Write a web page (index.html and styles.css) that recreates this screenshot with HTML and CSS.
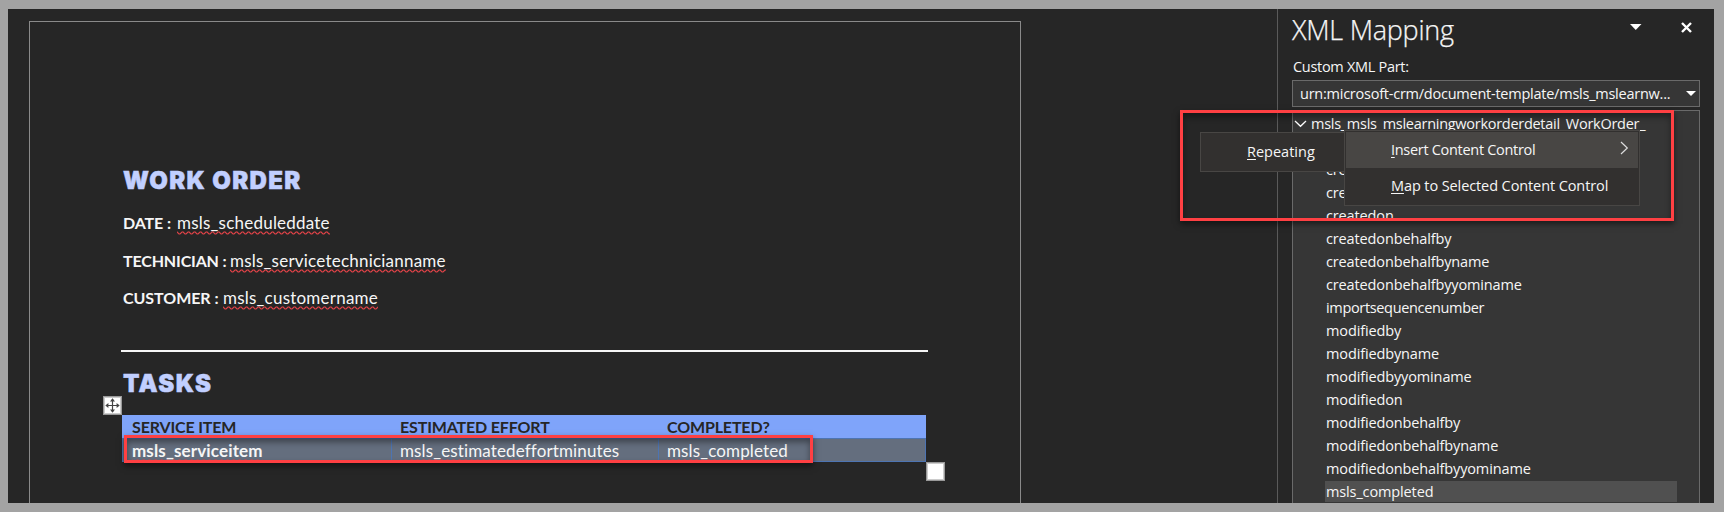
FILE: index.html
```
<!DOCTYPE html>
<html lang="en">
<head>
<meta charset="utf-8">
<title>XML Mapping</title>
<link rel="stylesheet" href="styles.css">
</head>
<body>
<div class="window">
  <main class="workspace">
    <article class="page">
      <h1 class="heading">WORK ORDER</h1>
      <p class="field"><b class="k-date">DATE :</b><span class="typo">msls_scheduleddate</span></p>
      <p class="field"><b class="k-tech">TECHNICIAN :</b><span class="typo">msls_servicetechnicianname</span></p>
      <p class="field"><b class="k-cust">CUSTOMER :</b><span class="typo">msls_customername</span></p>
      <div class="rule"></div>
      <h2 class="heading tasks-title">TASKS</h2>
      <div class="tasks">
        <div class="row head"><span>SERVICE ITEM</span><span>ESTIMATED EFFORT</span><span>COMPLETED?</span></div>
        <div class="row body"><span><b class="typo">msls_serviceitem</b></span><span><i class="typo">msls_estimatedeffortminutes</i></span><span><i class="typo">msls_completed</i></span></div>
        <div class="handle move"><svg width="15" height="15" viewBox="0 0 15 15"><path d="M7.5 1v13M1 7.5h13" stroke="#444" stroke-width="1.2"/><path d="M7.5 0.3L10 3.4H5zM7.5 14.7L10 11.6H5zM.3 7.5L3.4 5v5zM14.7 7.5L11.6 5v5z" fill="#444"/></svg></div>
        <div class="handle resize"></div>
      </div>
    </article>
  </main>
  <aside class="pane">
    <header class="pane-head">
      <h2 class="pane-title">XML Mapping</h2>
      <svg class="caret" width="12" height="6" viewBox="0 0 12 6"><path d="M0 0h11.5L5.75 6z" fill="#fff"/></svg>
      <svg class="close" width="11" height="11" viewBox="0 0 11 11"><path d="M1 1l9 9M10 1l-9 9" stroke="#fff" stroke-width="2.4"/></svg>
    </header>
    <div class="label">Custom XML Part:</div>
    <div class="select"><span>urn:microsoft-crm/document-template/msls_mslearnw...</span><svg width="10" height="5" viewBox="0 0 10 5"><path d="M0 0h10L5 5z" fill="#fff"/></svg></div>
    <div class="tree">
      <div class="node root"><svg width="13" height="8" viewBox="0 0 13 8"><path d="M1 1l5.5 5.3L12 1" fill="none" stroke="#fff" stroke-width="1.3"/></svg><span>msls_msls_mslearningworkorderdetail_WorkOrder_</span></div>
      <div class="node"></div>
      <div class="node">cre</div>
      <div class="node">cre</div>
      <div class="node">createdon</div>
      <div class="node">createdonbehalfby</div>
      <div class="node">createdonbehalfbyname</div>
      <div class="node">createdonbehalfbyyominame</div>
      <div class="node tight">importsequencenumber</div>
      <div class="node">modifiedby</div>
      <div class="node">modifiedbyname</div>
      <div class="node">modifiedbyyominame</div>
      <div class="node">modifiedon</div>
      <div class="node">modifiedonbehalfby</div>
      <div class="node">modifiedonbehalfbyname</div>
      <div class="node">modifiedonbehalfbyyominame</div>
      <div class="node selected">msls_completed</div>
    </div>
  </aside>
  <div class="menu context">
    <div class="item hover"><span class="insert"><u>I</u>nsert Content Control</span><svg width="9" height="14" viewBox="0 0 9 14"><path d="M1 1l6.3 6L1 13" fill="none" stroke="#ddd" stroke-width="1.2"/></svg></div>
    <div class="item"><span><u>M</u>ap to Selected Content Control</span></div>
  </div>
  <div class="menu submenu"><span><u>R</u>epeating</span></div>
  <div class="callout callout-menu"></div>
  <div class="callout callout-row"></div>
</div>
</body>
</html>
```

FILE: styles.css
```
* { box-sizing: border-box; margin: 0; }
body {
  height: 512px;
  padding: 9px 10px 9px 8px;
  background: #a3a3a3;
  color: #f6f6f6;
  font: 14.5px "Open Sans", sans-serif;
  overflow: hidden;
}
.window {
  position: relative;
  display: flex;
  height: 494px;
  background: #262626;
  overflow: hidden;
}
.window svg { flex: none; }

/* Document */
.workspace { flex: 1; padding: 12px 0 0 21px; }
.page {
  width: 992px;
  height: 500px;
  padding: 144px 91px 0 93px;
  border: 1px solid #8a8a8a;
  font: 17px/24px Lato, sans-serif;
}
.heading {
  font: 900 24px/30px Inter, sans-serif;
  letter-spacing: 1.35px;
  color: #c1cfff;
  -webkit-text-stroke: .5px #c1cfff;
  white-space: nowrap;
}
.field { display: flex; height: 37.5px; }
.heading + .field { margin-top: 15px; }
.field b { font-size: 16px; }
.field .typo { letter-spacing: .22px; }
.k-date { width: 54px; letter-spacing: -.1px; }
.k-tech { width: 107px; letter-spacing: -.15px; }
.k-cust { width: 100px; letter-spacing: -.05px; }
.typo {
  display: inline-block;
  height: 24px;
  font-style: normal;
  background: url("data:image/svg+xml,%3Csvg xmlns='http://www.w3.org/2000/svg' width='6' height='4'%3E%3Cpath d='M-1 .2L0 1l2 2h1l2-2h1l1-.8' fill='none' stroke='%23e34247' stroke-width='1.1'/%3E%3C/svg%3E") 0 100% repeat-x;
}
.rule { width: 807px; height: 2px; margin: 26px 0 0 -2px; background: #f6f6f6; }
.tasks-title { margin-top: 17px; }
.tasks { position: relative; width: 804px; margin: 16px 0 0 -1px; }
.row { display: grid; grid-template-columns: 268px 267px 269px; }
.row span { padding-left: 10px; white-space: nowrap; }
.head {
  height: 23px;
  background: #7fa4fa;
  color: #262626;
  font-weight: bold;
  font-size: 16px;
  letter-spacing: -.15px;
}
.body {
  height: 24px;
  border: 1px solid #4d74b2;
  background: #646e7e;
  letter-spacing: .13px;
}
.body span { padding-left: 9px; height: 22px; }
.body span + span { padding-left: 8px; border-left: 1px solid #4d74b2; }
.handle {
  position: absolute;
  width: 19px;
  height: 19px;
  border: 1px solid #999;
  background: #fff;
  box-shadow: inset 0 0 0 1px #ccc;
}
.move { left: -19px; top: -19px; padding: 1px; line-height: 0; }
.resize { left: 804px; top: 47px; }

/* Task pane */
.pane { width: 437px; padding: 0 14px; border-left: 1px solid #5a5a5a; }
.pane-head { display: flex; height: 47px; }
.pane-title {
  width: 338px;
  font-weight: 300;
  font-size: 27px;
  line-height: 42px;
  letter-spacing: -.25px;
  -webkit-text-stroke: .25px #f6f6f6;
}
.caret { margin-top: 15px; }
.close { margin: 13px 0 0 39px; }
.label { height: 24px; padding-left: 1px; line-height: 22px; letter-spacing: -.3px; }
.select {
  display: flex;
  align-items: center;
  justify-content: space-between;
  width: 408px;
  height: 27px;
  padding: 0 3px 0 7px;
  border: 1px solid #6a6a6a;
  background: #363636;
  letter-spacing: -.24px;
}
.tree {
  width: 408px;
  height: 420px;
  margin-top: 3px;
  padding-top: 2px;
  border: 1px solid #6a6a6a;
  background: #363636;
}
.node {
  width: 352px;
  height: 21px;
  margin: 0 0 2px 32px;
  padding-left: 1px;
  line-height: 21px;
  letter-spacing: -.13px;
  white-space: nowrap;
}
.tight { letter-spacing: -.34px; }
.root {
  display: flex;
  align-items: center;
  gap: 4px;
  margin-left: 0;
  letter-spacing: -.28px;
}
.selected { background: #505050; }

/* Context menus */
.menu { position: absolute; border: 1px solid #484644; background: #32302f; }
.menu u { text-underline-offset: 2px; }
.context { left: 1336px; top: 121px; width: 296px; height: 76px; padding: 1px; letter-spacing: -.1px; }
.item { display: flex; height: 36px; padding: 0 9px 2px 45px; align-items: center; justify-content: space-between; }
.hover { background: #484644; }
.insert { letter-spacing: -.3px; }
.hover svg { margin-top: -3px; }
.submenu { left: 1192px; top: 123px; width: 145px; height: 40px; padding-left: 46px; line-height: 38px; }

/* Highlight frames */
.callout {
  position: absolute;
  border: 3px solid #ff4043;
  box-shadow: 0 3px 6px rgba(0, 0, 0, .5), inset 0 4px 6px rgba(0, 0, 0, .4);
}
.callout-menu { left: 1172px; top: 101px; width: 494px; height: 111px; }
.callout-row { left: 116px; top: 426px; width: 689px; height: 28px; }
```
